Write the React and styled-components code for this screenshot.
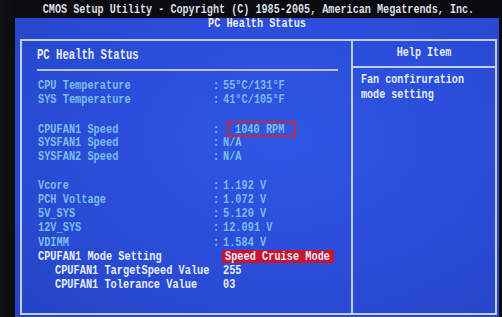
import React from 'react';
import styled, { createGlobalStyle } from 'styled-components';

const Global = createGlobalStyle`
  html, body { margin: 0; padding: 0; background: #09090e; }
  body {
    width: 502px; height: 317px; overflow: hidden;
    font-family: "Liberation Mono", "DejaVu Sans Mono", monospace;
  }
`;

const Screen = styled.div`
  width: 502px;
  height: 317px;
  display: flex;
  flex-direction: column;
  background: linear-gradient(90deg, #121116 0px, #0b0b10 15px, #0a0a10 100%);
`;

const TopBar = styled.div`
  height: 18px;
  box-sizing: border-box;
  padding-top: 2px;
  margin-left: 15px;
  display: flex;
  align-items: center;
  justify-content: center;
`;

const Txt = styled.span`
  display: inline-block;
  white-space: pre;
  font-weight: 700;
  font-size: ${p => p.$fs || 10.3}px;
  line-height: 1;
  color: ${p => p.$c || '#79bdf0'};
  transform: scaleY(${p => p.$sy || 1.18});
  transform-origin: center center;
`;

const Blue = styled.div`
  flex: 1;
  margin-left: 15px;
  margin-right: 3px;
  display: flex;
  flex-direction: column;
  background: radial-gradient(ellipse at 55% 40%, #2e55e4 0%, #2a4dd8 55%, #2444c4 100%);
`;

const Subtitle = styled.div`
  height: 21px;
  box-sizing: border-box;
  padding-bottom: 7px;
  display: flex;
  align-items: center;
  justify-content: center;
`;

const Frame = styled.div`
  width: 477px;
  height: 276px;
  box-sizing: border-box;
  margin-left: 5px;
  border: 2px solid #c3cbef;
  display: grid;
  grid-template-columns: 329px 1fr;
`;

const Main = styled.div`
  display: flex;
  flex-direction: column;
`;

const Heading = styled.div`
  height: 28px;
  padding-left: 15px;
  display: flex;
  align-items: center;
`;

const Rule = styled.div`
  height: 2px;
  margin: 0 13px 0 15px;
  background: #b9c3ee;
`;

const Rows = styled.div`
  padding: 7px 0 0 16px;
  display: flex;
  flex-direction: column;
`;

const Row = styled.div`
  height: 14.25px;
  display: grid;
  grid-template-columns: 175px 10px 1fr;
  align-items: center;
`;

const Label = styled.div`
  padding-left: ${p => (p.$indent ? 17 : 0)}px;
  display: flex;
  align-items: center;
`;

const Value = styled.div`
  display: flex;
  align-items: center;
`;

const Boxed = styled.span`
  display: inline-flex;
  align-items: center;
  height: 16px;
  box-sizing: border-box;
  margin-left: 4px;
  padding: 0 10px 0 6px;
  border: 2px solid #c42a3e;
`;

const Highlight = styled.span`
  display: inline-flex;
  align-items: center;
  height: 13px;
  margin-left: -1px;
  padding: 0 4px 0 3px;
  background: #c8142e;
`;

const Help = styled.div`
  border-left: 2px solid #c3cbef;
  display: flex;
  flex-direction: column;
`;

const HelpHead = styled.div`
  height: 25px;
  border-bottom: 2px solid #c3cbef;
  display: flex;
  align-items: center;
  justify-content: center;
`;

const HelpBody = styled.div`
  padding: 6px 0 0 8px;
  display: flex;
  flex-direction: column;
`;

const HelpLine = styled.div`
  height: 15px;
  display: flex;
  align-items: center;
`;

const WHITE = '#e8ecff';
const CYAN = '#79bdf0';

const rows = [
  { label: 'CPU Temperature', value: '55°C/131°F' },
  { label: 'SYS Temperature', value: '41°C/105°F' },
  null,
  { label: 'CPUFAN1 Speed', value: '1040 RPM', boxed: true },
  { label: 'SYSFAN1 Speed', value: 'N/A' },
  { label: 'SYSFAN2 Speed', value: 'N/A' },
  null,
  { label: 'Vcore', value: '1.192 V' },
  { label: 'PCH Voltage', value: '1.072 V' },
  { label: '5V_SYS', value: '5.120 V' },
  { label: '12V_SYS', value: '12.091 V' },
  { label: 'VDIMM', value: '1.584 V' },
  { label: 'CPUFAN1 Mode Setting', value: 'Speed Cruise Mode', white: true, highlight: true },
  { label: 'CPUFAN1 TargetSpeed Value', value: '255', white: true, indent: true },
  { label: 'CPUFAN1 Tolerance Value', value: '03', white: true, indent: true },
];

function DataRow({ r }) {
  const c = r.white ? WHITE : CYAN;
  let val = <Txt $c={c}>{r.value}</Txt>;
  if (r.boxed) val = <Boxed>{val}</Boxed>;
  if (r.highlight) val = <Highlight><Txt $c={WHITE}>{r.value}</Txt></Highlight>;
  return (
    <Row>
      <Label $indent={r.indent}><Txt $c={c}>{r.label}</Txt></Label>
      <Value>{r.white ? null : <Txt $c={c}>:</Txt>}</Value>
      <Value>{val}</Value>
    </Row>
  );
}

export default function App() {
  return (
    <>
      <Global />
      <Screen>
        <TopBar>
          <Txt $fs={10.15} $sy={1.32} $c="#dcdfe9">
            CMOS Setup Utility - Copyright (C) 1985-2005, American Megatrends, Inc.
          </Txt>
        </TopBar>
        <Blue>
          <Subtitle>
            <Txt $fs={10.2} $sy={1.25} $c={WHITE}>PC Health Status</Txt>
          </Subtitle>
          <Frame>
            <Main>
              <Heading>
                <Txt $fs={10.6} $sy={1.4} $c={WHITE}>PC Health Status</Txt>
              </Heading>
              <Rule />
              <Rows>
                {rows.map((r, i) => (r ? <DataRow key={i} r={r} /> : <Row key={i} />))}
              </Rows>
            </Main>
            <Help>
              <HelpHead>
                <Txt $fs={10.1} $sy={1.35} $c={WHITE}>Help Item</Txt>
              </HelpHead>
              <HelpBody>
                <HelpLine><Txt $fs={10.1} $sy={1.2} $c={WHITE}>Fan confiruration</Txt></HelpLine>
                <HelpLine><Txt $fs={10.1} $sy={1.2} $c={WHITE}>mode setting</Txt></HelpLine>
              </HelpBody>
            </Help>
          </Frame>
        </Blue>
      </Screen>
    </>
  );
}
